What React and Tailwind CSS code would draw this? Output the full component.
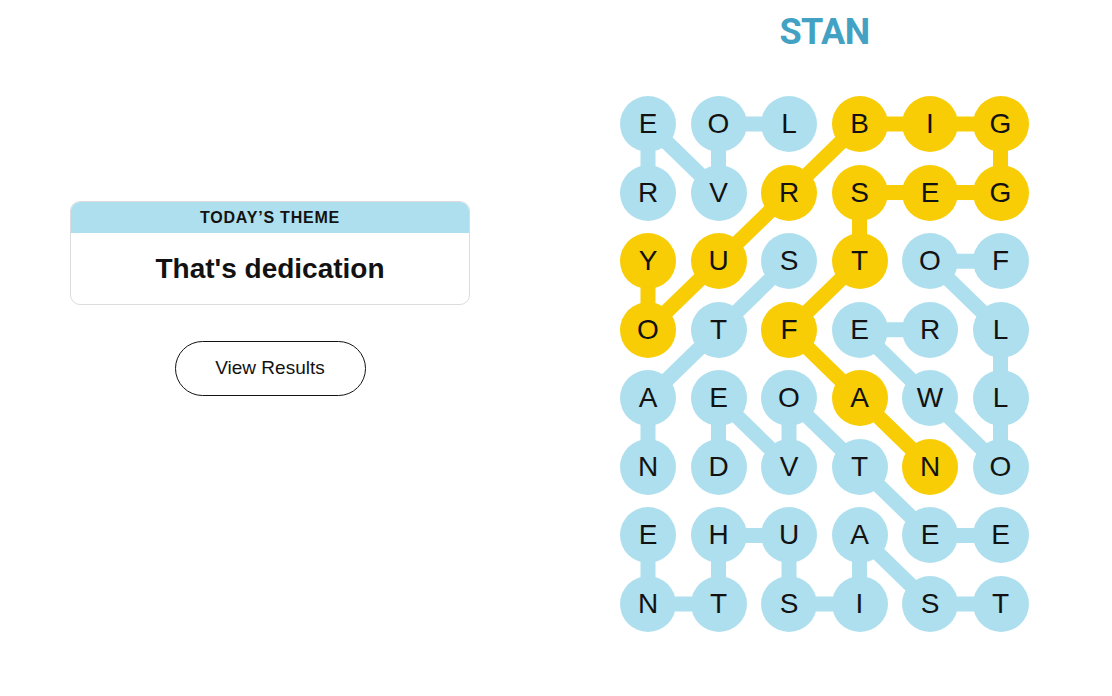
import React from "react";

const ROWS = [
  "EOLBIG",
  "RVRSEG",
  "YUSTOF",
  "OTFERL",
  "AEOAWL",
  "NDVTNO",
  "EHUAEE",
  "NTSIST",
];

const YELLOW = "#f8cd05";
const BLUE = "#aedfee";

const spangram = [[2,0],[3,0],[2,1],[1,2],[0,3],[0,4],[0,5],[1,5],[1,4],[1,3],[2,3],[3,2],[4,3],[5,4]];
const words = [
  [[0,2],[0,1],[1,1],[0,0],[1,0]],
  [[2,2],[3,1],[4,0],[5,0]],
  [[2,5],[2,4],[3,5],[4,5],[5,5],[4,4],[3,3],[3,4]],
  [[5,1],[4,1],[5,2],[4,2],[5,3],[6,4],[6,5]],
  [[6,0],[7,0],[7,1],[6,1],[6,2],[7,2],[7,3],[6,3],[7,4],[7,5]],
];

const yellowSet = new Set(spangram.map(([r, c]) => `${r}-${c}`));

const CX = (c) => 28 + c * 70.5;
const CY = (r) => 28 + r * 68.57;

function Path({ pts, color }) {
  const d = pts.map(([r, c], i) => `${i === 0 ? "M" : "L"}${CX(c)} ${CY(r)}`).join(" ");
  return <path d={d} stroke={color} strokeWidth="15" fill="none" strokeLinejoin="round" strokeLinecap="round" />;
}

export default function App() {
  return (
    <div className="w-[1112px] h-[696px] bg-white flex" style={{ fontFamily: '"Liberation Sans", Arial, sans-serif' }}>
      <div className="w-[540px] pt-[201px] flex flex-col items-center">
        <div className="w-[400px] border border-[#dcdcdc] rounded-[10px] overflow-hidden">
          <div className="h-[31px] bg-[#aedfee] flex items-center justify-center text-[16px] font-bold tracking-[0.8px] text-[#121212]">
            TODAY’S THEME
          </div>
          <div className="h-[71px] flex items-center justify-center text-[28px] font-bold text-[#121212]">
            That's dedication
          </div>
        </div>
        <button className="mt-[36px] w-[191px] h-[55px] rounded-full border border-[#121212] bg-white text-[19px] text-[#121212] flex items-center justify-center">
          View Results
        </button>
      </div>
      <div className="ml-[80px] w-[409px] flex flex-col">
        <div
          className="pt-[14px] h-[96px] text-center text-[36px] leading-[36px] font-bold text-[#43a2c3] tracking-[-0.5px]"
          style={{ fontFamily: '"Liberation Sans Narrow", Roboto, Arial, sans-serif' }}
        >
          STAN
        </div>
        <div className="relative w-[409px] h-[536px]">
          <svg className="absolute inset-0" width="409" height="536" viewBox="0 0 409 536">
            {words.map((w, i) => (
              <Path key={i} pts={w} color={BLUE} />
            ))}
            <Path pts={spangram} color={YELLOW} />
          </svg>
          <div className="relative grid grid-cols-[repeat(6,56px)] gap-x-[14.5px] gap-y-[12.57px]">
            {ROWS.map((row, r) =>
              row.split("").map((ch, c) => (
                <div
                  key={`${r}-${c}`}
                  className={`w-[56px] h-[56px] rounded-full flex items-center justify-center text-[28px] text-[#121212] ${
                    yellowSet.has(`${r}-${c}`) ? "bg-[#f8cd05]" : "bg-[#aedfee]"
                  }`}
                >
                  {ch}
                </div>
              ))
            )}
          </div>
        </div>
      </div>
    </div>
  );
}
